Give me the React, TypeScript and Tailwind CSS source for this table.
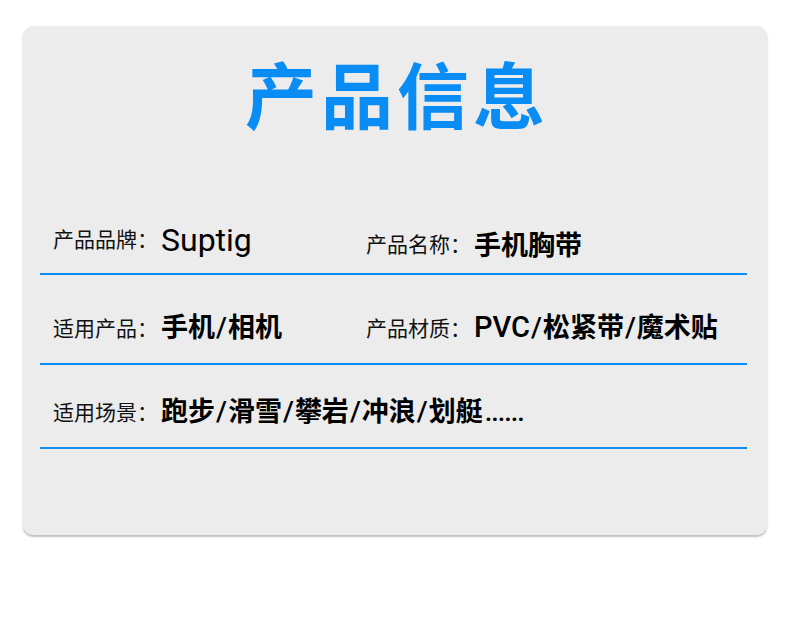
import React from "react";

const cjk = '"Noto Sans CJK SC", sans-serif';
const latin = '"Roboto", "Noto Sans CJK SC", sans-serif';

function Label({ children }: { children: React.ReactNode }) {
  return (
    <span className="text-[21px] leading-none text-[#111]" style={{ fontFamily: cjk }}>
      {children}
    </span>
  );
}

function C({ children }: { children: React.ReactNode }) {
  return (
    <span className="font-semibold" style={{ fontFamily: cjk }}>
      {children}
    </span>
  );
}

function L({ children }: { children: React.ReactNode }) {
  return (
    <span className="font-medium text-[29px]" style={{ fontFamily: latin }}>
      {children}
    </span>
  );
}

function S() {
  return (
    <span className="font-medium text-[28px] px-[1px]" style={{ fontFamily: latin }}>
      /
    </span>
  );
}

function Value({ children, className = "" }: { children: React.ReactNode; className?: string }) {
  return <span className={`ml-[3px] text-[27px] leading-none text-black ${className}`}>{children}</span>;
}

export default function App() {
  return (
    <div className="w-[790px] h-[621px] bg-white" style={{ fontFamily: cjk }}>
      <div className="pt-[26px] px-[23px]">
        <div className="h-[509px] rounded-[10px] bg-[#ececec] shadow-[0_2px_2px_rgba(0,0,0,0.25)] pl-[17px] pr-[20px] pt-[30px]">
          <h1 className="text-center text-[72px] leading-none font-bold text-[#0a8cf5] tracking-[4px] pl-[7px]">
            产品信息
          </h1>
          {/* Row 1 */}
          <div className="mt-[90px] border-b-2 border-[#0a8cf5]">
            <div className="flex h-[40px] items-center pl-[13px] mb-[15px]">
              <div className="w-[313px] flex items-center">
                <Label>产品品牌：</Label>
                <Value className="text-[32px]">
                  <span className="font-normal" style={{ fontFamily: latin }}>
                    Suptig
                  </span>
                </Value>
              </div>
              <div className="pt-[10px] flex items-center">
                <Label>产品名称：</Label>
                <Value>
                  <C>手机胸带</C>
                </Value>
              </div>
            </div>
          </div>
          {/* Row 2 */}
          <div className="border-b-2 border-[#0a8cf5]">
            <div className="flex h-[40px] items-center pl-[13px] mt-[32px] mb-[16px]">
              <div className="w-[313px] flex items-center">
                <Label>适用产品：</Label>
                <Value>
                  <C>手机</C>
                  <S />
                  <C>相机</C>
                </Value>
              </div>
              <div className="flex items-center">
                <Label>产品材质：</Label>
                <Value>
                  <L>PVC</L>
                  <S />
                  <C>松紧带</C>
                  <S />
                  <C>魔术贴</C>
                </Value>
              </div>
            </div>
          </div>
          {/* Row 3 */}
          <div className="border-b-2 border-[#0a8cf5]">
            <div className="flex h-[40px] items-center pl-[13px] mt-[26px] mb-[16px]">
              <Label>适用场景：</Label>
              <Value>
                <C>跑步</C>
                <S />
                <C>滑雪</C>
                <S />
                <C>攀岩</C>
                <S />
                <C>冲浪</C>
                <S />
                <C>划艇</C>
                <span className="font-medium tracking-[-1px] pl-[2px]" style={{ fontFamily: latin }}>
                  ......
                </span>
              </Value>
            </div>
          </div>
        </div>
      </div>
    </div>
  );
}
